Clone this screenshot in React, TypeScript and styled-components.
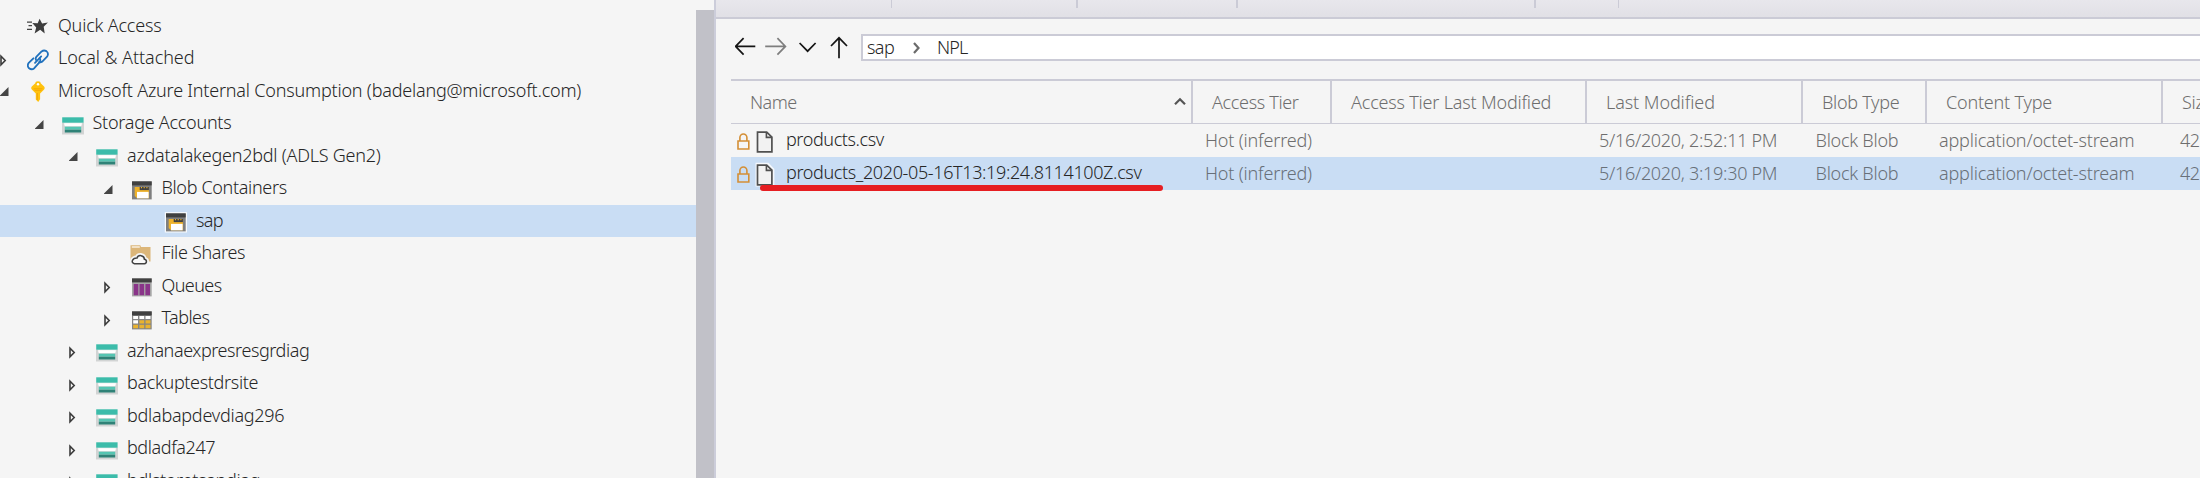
import React from 'react';
import styled, { createGlobalStyle, css } from 'styled-components';

const GlobalStyle = createGlobalStyle`
  * { box-sizing: border-box; }
  html, body { margin: 0; padding: 0; overflow: hidden; background: #f5f5f5; }
  body { font-family: "Noto Sans", "Open Sans", sans-serif; font-weight: 300; font-size: 18px; color: #262626; }
  svg { display: block; flex: none; }
`;

const Shell = styled.div`
  display: grid;
  grid-template-columns: 696px 18px 1486px;
  width: 2200px;
  height: 478px;
  overflow: hidden;
`;

const TreePane = styled.nav`
  padding-top: 9.9px;
  height: 478px;
  overflow: hidden;
`;

const TreeRow = styled.div<{ $level: number; $selected?: boolean }>`
  display: flex;
  align-items: flex-start;
  height: 32.5px;
  padding-left: ${(p) => p.$level * 34.5}px;
  ${(p) => p.$selected && css`background: #c9ddf4;`}
`;

const ExpanderSlot = styled.span`
  width: 27.3px;
  flex: none;
  padding-top: 9.4px;
`;

const IconSlot = styled.span`
  width: 30.7px;
  flex: none;
  padding-top: 6.3px;
`;

const Text = styled.span<{ $track: number }>`
  white-space: pre;
  letter-spacing: ${(p) => p.$track}px;
`;

const TreeLabel = styled(Text)`
  line-height: 30px;
`;

const Scrollbar = styled.div`
  margin-top: 10px;
  background: #c1c1c8;
`;

const MainPane = styled.main`
  border-left: 2px solid #cccdda;
  height: 478px;
  overflow: hidden;
`;

const Toolbar = styled.div`
  display: flex;
  height: 19px;
  background: linear-gradient(#e8e7ec, #e1e0e6);
  border-bottom: 2px solid #cbcbd6;
`;

const ToolbarGroup = styled.div<{ $width: number; $line: number }>`
  width: ${(p) => p.$width}px;
  height: 8px;
  border-right: ${(p) => p.$line}px solid #cbcbd6;
`;

const NavBar = styled.div`
  display: flex;
  padding: 15px 0 0 19px;
  height: 60px;
`;

const NavButtons = styled.div`
  display: flex;
  width: 126px;
`;

const PathBox = styled.div`
  display: flex;
  align-items: flex-start;
  flex: 1;
  height: 27px;
  padding-left: 4px;
  border: 2px solid #cbcbd6;
  border-right: 0;
  background: #fff;
`;

const PathSegment = styled(Text)<{ $width: number }>`
  width: ${(p) => p.$width}px;
  line-height: 23px;
`;

const PathChevron = styled.span`
  width: 25px;
  padding-top: 6px;
`;

const Grid = styled.section`
  margin-left: 15px;
  border-top: 2px solid #cbcbd6;
`;

const columns = '462px 139px 255px 216px 124px 236px 60px';

const HeaderRow = styled.div`
  display: grid;
  grid-template-columns: ${columns};
  height: 43px;
  border-bottom: 1px solid #cbcbd6;
  color: #6e6e6e;
`;

const HeaderCell = styled.div`
  display: flex;
  justify-content: space-between;
  padding: 7px 5px 0 19px;
  border-right: 2px solid #cbcbd6;
  line-height: 29px;
  overflow: hidden;
`;

const SortMark = styled.span`
  padding-top: 9px;
`;

const DataRow = styled.div<{ $selected?: boolean }>`
  position: relative;
  display: grid;
  grid-template-columns: ${columns};
  height: 33px;
  color: #6e6e6e;
  ${(p) => p.$selected && css`background: #c9ddf4; color: #687079;`}
`;

const NameCell = styled.div`
  display: flex;
  color: #262626;
  padding-left: 5.6px;
  line-height: 31px;
`;

const LockSlot = styled.span`
  width: 18px;
  padding-top: 9px;
`;

const FileSlot = styled.span`
  width: 31.4px;
  padding-top: 6px;
`;

const Cell = styled.div<{ $inset?: number }>`
  padding-left: ${(p) => p.$inset ?? 12}px;
  line-height: 33px;
  overflow: hidden;
`;

const RedStroke = styled.div`
  position: absolute;
  left: 29px;
  top: 28px;
  width: 403px;
  height: 6px;
  border-radius: 3px;
  background: #e61e22;
`;

const Expanded = () => (
  <svg width="9" height="12" viewBox="0 0 9 12"><path d="M8.5 3v9H-.5z" fill="#454545" /></svg>
);

const Collapsed = () => (
  <svg width="7" height="16" viewBox="0 0 7 16"><path d="M1 4.3v8.4L5.2 8.5z" fill="none" stroke="#3c3c3c" strokeWidth="1.6" /></svg>
);

const QuickIcon = () => (
  <svg width="22" height="22" viewBox="0 0 22 22">
    <path d="M0 6.1h5M1.5 9.7h3.5M0 13.3h5" stroke="#444" strokeWidth="1.3" />
    <path d="M12.6 2.7l2.5 4.7 5.8-.9-4.2 4.2 1 6.9-4.5-3.8-5.6 3.6 1.6-6L5.3 7.1l5.4.2z" fill="#3d3d3d" />
  </svg>
);

const LinkIcon = () => (
  <svg width="22" height="22" viewBox="0 0 22 22">
    <g fill="none" stroke="#2071bd" strokeWidth="1.8" strokeLinecap="round" strokeLinejoin="round">
      <path d="M9.2 11.2Q8 9.4 9.5 7.7L14.6 2.4Q16.8.8 19.4 2.1 22 4.2 20.3 7.3L15 12.8Q13.5 13.8 12.2 13" />
      <path d="M12.7 9.2Q14 11.3 12.6 13.1L7.3 19.2Q4.7 21.3 2.1 19.3-.2 17 1.5 14.2L6.4 9.3" />
      <path d="M8 13.9l6.2-6.5" />
    </g>
  </svg>
);

const KeyIcon = () => (
  <svg width="22" height="22" viewBox="0 0 22 22">
    <path d="M11 .3c1.9 0 2.7.8 2.7 1.9l3.4 3.3c.8.9.8 2 0 2.9l-4 4v5.9L11.2 21l-2.4-2.6v-6l-4-4c-.8-.9-.8-2 0-2.9L8.3 2.2C8.4 1.1 9.1.3 11 .3z" fill="#ffc20e" />
    <circle cx="11" cy="3.3" r="1.2" fill="#fff" />
    <path d="M6.5 7.8h9M7.5 9.3h7" stroke="#f7a900" strokeWidth="1" />
    <path d="M10.3 12v7" stroke="#f3aa0a" strokeWidth="1.3" />
  </svg>
);

const StorageIcon = () => (
  <svg width="22" height="22" viewBox="0 0 22 22">
    <path d="M0 8.5h22v12H0z" fill="#d2d4d4" />
    <path d="M2 8.5h18v3H2z" fill="#f1f1f1" />
    <path d="M.2 3.3h21.4v5.4H.2z" fill="#3cbcaa" />
    <path d="M2.8 9.5h16.4v2.7H2.8z" fill="#fff" />
    <path d="M2.8 12.7h16.4v3H2.8z" fill="#55c5b2" />
    <path d="M2.8 15.7h16.4v2.8H2.8z" fill="#2f8277" />
  </svg>
);

const BlobIcon = ({ selected }: { selected?: boolean }) => (
  <svg width="22" height="22" viewBox="0 0 22 22" overflow="visible">
    {selected && <path d="M-.2 1.1h22.2v20.4H-.2z" fill="#f8fafc" />}
    <path d="M1 2.4h19.7v18H1z" fill="#7f7f7f" />
    <path d="M1 2.4h19.7v4H1z" fill="#404040" />
    <path d="M3.7 8h14.2v11.3H6L3.7 17z" fill="#eeb22b" />
    <path d="M8.7 8h9.2v3.1H8.7z" fill="#424242" />
    <path d="M10.5 8v1.2M13.2 8v1.2M15.9 8v1.2" stroke="#eeb22b" strokeWidth="1.1" />
    <path d="M6 12.9h11.6v6.4H6z" fill="#fff" />
  </svg>
);

const ShareIcon = () => (
  <svg width="22" height="22" viewBox="0 0 22 22" overflow="visible">
    <path d="M-.5 1.3H9.3L10 3h9.5v14.5H-.5z" fill="#dcb679" />
    <path d="M.8 3h8" stroke="#fbf4e8" strokeWidth="1.4" />
    <path d="M3.5 20h10.2c3.2-.2 3.2-4.6 0-5-.4-5-7-5-7.9-1.4C.4 13.7-1 19.4 3.5 20z" fill="#f5f5f5" stroke="#f5f5f5" strokeWidth="4" />
    <path d="M3.4 19.7h10c2.7-.2 2.7-4.1 0-4.4-.2-4.6-6.3-4.7-7.3-1.4C1.2 13.7-.6 19 3.4 19.7z" fill="#fafafa" stroke="#424242" strokeWidth="1.5" />
  </svg>
);

const QueueIcon = () => (
  <svg width="22" height="22" viewBox="0 0 22 22">
    <path d="M1 2.4h19.7v18H1z" fill="#a6a6a6" />
    <path d="M1 2.4h19.7v4H1z" fill="#404040" />
    <path d="M2.7 7.9h4.6v11.4H2.7zM8.5 7.9h4.6v11.4H8.5zM14.4 7.9H19v11.4h-4.6z" fill="#8a3489" />
  </svg>
);

const TableIcon = () => (
  <svg width="22" height="22" viewBox="0 0 22 22">
    <path d="M1 2.4h19.7v18H1z" fill="#858585" />
    <path d="M1 2.4h19.7v4H1z" fill="#404040" />
    <path d="M2.2 7.1h4.8v3H2.2zM8.4 7.1h4.8v3H8.4zM14.5 7.1h5v3h-5zM2.2 11.3h4.8v3.2H2.2z" fill="#fff" />
    <path d="M8.4 11.3h4.8v3.2H8.4zM14.5 11.3h5v3.2h-5zM2.2 15.7h4.8v3.6H2.2zM8.4 15.7h4.8v3.6H8.4zM14.5 15.7h5v3.6h-5z" fill="#eab32f" />
  </svg>
);

const LockIcon = () => (
  <svg width="13" height="18" viewBox="0 0 13 18">
    <path d="M1 8h10.8v8H1zM2.9 8V4.5a3.5 3.5 0 0 1 7 0V8" fill="none" stroke="#d48f36" strokeWidth="1.6" />
  </svg>
);

const FileIcon = ({ selected }: { selected?: boolean }) => (
  <svg width="19" height="24" viewBox="0 0 19 24" overflow="visible">
    {selected && <path d="M.5-.2h13L19.4 6v17.5H.5z" fill="#f5f8fc" />}
    <path d="M2.5 2.1h9.2l5.2 5v14.7H2.5z" fill="#f2f2f2" stroke="#505050" strokeWidth="1.7" />
    <path d="M11.4 2.1v5.3h5.3" fill="none" stroke="#505050" strokeWidth="1.6" />
  </svg>
);

const NavArrows = () => (
  <svg width="126" height="28" viewBox="0 0 126 28" fill="none" stroke="#141414" strokeWidth="1.7">
    <path d="M20.3 12.4H.8M8.6 4.2.6 12.4l8 8.2" />
    <path d="M30.2 12.4H50M42.4 4.2l8 8.2-8 8.2" stroke="#7e7e7e" />
    <path d="M64.6 9l8 8.2 8-8.2" />
    <path d="M104 24.2V4M96 12l8-8.2 8 8.2" />
  </svg>
);

const icons = {
  quick: QuickIcon, link: LinkIcon, key: KeyIcon, storage: StorageIcon,
  blob: BlobIcon, share: ShareIcon, queue: QueueIcon, table: TableIcon,
};

type Node = {
  label: string; level: number; icon: keyof typeof icons; track: number;
  open?: boolean; closed?: boolean; selected?: boolean;
};

const nodes: Node[] = [
  { label: 'Quick Access', level: 0, icon: 'quick', track: -0.19 },
  { label: 'Local & Attached', level: 0, icon: 'link', track: -0.06, closed: true },
  { label: 'Microsoft Azure Internal Consumption (badelang@microsoft.com)', level: 0, icon: 'key', track: -0.2, open: true },
  { label: 'Storage Accounts', level: 1, icon: 'storage', track: -0.26, open: true },
  { label: 'azdatalakegen2bdl (ADLS Gen2)', level: 2, icon: 'storage', track: -0.24, open: true },
  { label: 'Blob Containers', level: 3, icon: 'blob', track: -0.34, open: true },
  { label: 'sap', level: 4, icon: 'blob', track: -0.6, selected: true },
  { label: 'File Shares', level: 3, icon: 'share', track: -0.34 },
  { label: 'Queues', level: 3, icon: 'queue', track: -0.6, closed: true },
  { label: 'Tables', level: 3, icon: 'table', track: -0.55, closed: true },
  { label: 'azhanaexpresresgrdiag', level: 2, icon: 'storage', track: -0.43, closed: true },
  { label: 'backuptestdrsite', level: 2, icon: 'storage', track: -0.34, closed: true },
  { label: 'bdlabapdevdiag296', level: 2, icon: 'storage', track: -0.25, closed: true },
  { label: 'bdladfa247', level: 2, icon: 'storage', track: -0.4, closed: true },
  { label: 'bdlstoretsapdiag', level: 2, icon: 'storage', track: -0.3, closed: true },
];

const headers: [string, number][] = [
  ['Name', -0.5], ['Access Tier', -0.34], ['Access Tier Last Modified', -0.19],
  ['Last Modified', -0.08], ['Blob Type', -0.29], ['Content Type', -0.21], ['Size', -0.3],
];

const files = [
  { name: 'products.csv', track: -0.4, date: '5/16/2020, 2:52:11 PM', selected: false },
  { name: 'products_2020-05-16T13:19:24.8114100Z.csv', track: -0.37, date: '5/16/2020, 3:19:30 PM', selected: true },
];

export default function App() {
  return (
    <>
      <GlobalStyle />
      <Shell>
        <TreePane>
          {nodes.map((n) => {
            const Icon = icons[n.icon];
            return (
              <TreeRow key={n.label} $level={n.level} $selected={n.selected}>
                <ExpanderSlot>{n.open ? <Expanded /> : n.closed ? <Collapsed /> : null}</ExpanderSlot>
                <IconSlot><Icon selected={n.selected} /></IconSlot>
                <TreeLabel $track={n.track}>{n.label}</TreeLabel>
              </TreeRow>
            );
          })}
        </TreePane>
        <Scrollbar />
        <MainPane>
          <Toolbar>
            <ToolbarGroup $width={176} $line={1} />
            <ToolbarGroup $width={186} $line={2} />
            <ToolbarGroup $width={160} $line={2} />
            <ToolbarGroup $width={298} $line={2} />
            <ToolbarGroup $width={83} $line={1} />
          </Toolbar>
          <NavBar>
            <NavButtons><NavArrows /></NavButtons>
            <PathBox>
              <PathSegment $track={-0.6} $width={45}>sap</PathSegment>
              <PathChevron>
                <svg width="9" height="12" viewBox="0 0 9 12"><path d="M2 1l4.5 5L2 11" fill="none" stroke="#6b6b6b" strokeWidth="2.2" /></svg>
              </PathChevron>
              <PathSegment $track={-0.8} $width={60}>NPL</PathSegment>
            </PathBox>
          </NavBar>
          <Grid>
            <HeaderRow>
              {headers.map(([label, track], i) => (
                <HeaderCell key={label}>
                  <Text $track={track}>{label}</Text>
                  {i === 0 && (
                    <SortMark>
                      <svg width="12" height="9" viewBox="0 0 12 9"><path d="M1 7.3l5-5 5 5" fill="none" stroke="#555" strokeWidth="2.2" /></svg>
                    </SortMark>
                  )}
                </HeaderCell>
              ))}
            </HeaderRow>
            {files.map((f) => (
              <DataRow key={f.name} $selected={f.selected}>
                <NameCell>
                  <LockSlot><LockIcon /></LockSlot>
                  <FileSlot><FileIcon selected={f.selected} /></FileSlot>
                  <Text $track={f.track}>{f.name}</Text>
                </NameCell>
                <Cell><Text $track={-0.18}>Hot (inferred)</Text></Cell>
                <Cell />
                <Cell><Text $track={-0.29}>{f.date}</Text></Cell>
                <Cell $inset={12.5}><Text $track={-0.25}>Block Blob</Text></Cell>
                <Cell><Text $track={-0.19}>application/octet-stream</Text></Cell>
                <Cell $inset={17}><Text $track={-0.6}>42</Text></Cell>
                {f.selected && <RedStroke />}
              </DataRow>
            ))}
          </Grid>
        </MainPane>
      </Shell>
    </>
  );
}
